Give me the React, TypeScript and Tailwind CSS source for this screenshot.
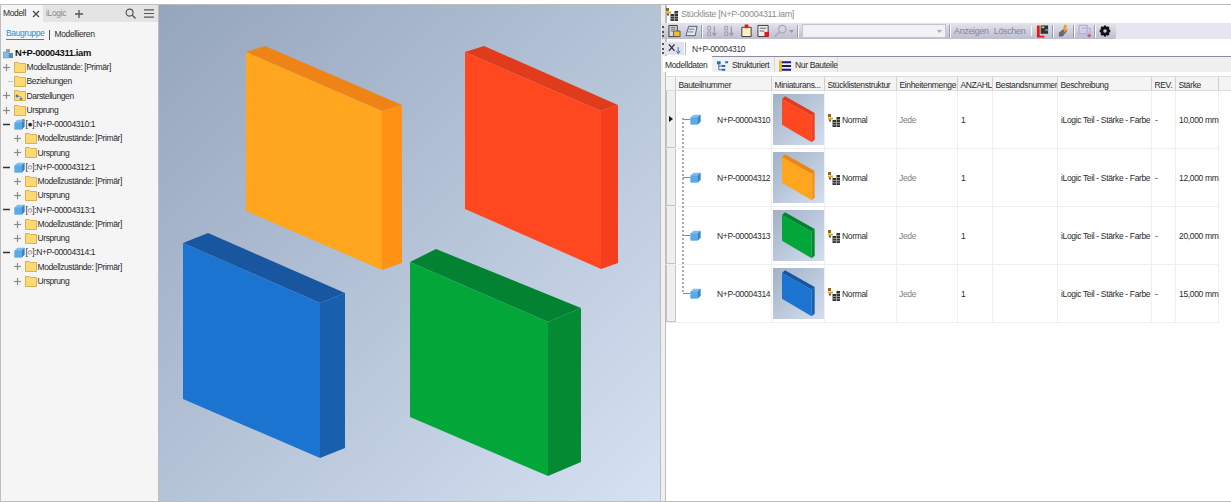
import type { ReactNode } from 'react';

const font = { fontFamily: '"Liberation Sans", Arial, sans-serif' };

function Folder({ dots }: { dots?: boolean }) {
  return (
    <svg width="12" height="11" viewBox="0 0 12 11" className="shrink-0">
      <path d="M0.500 0.500h4l1 1h6v9h-11z" fill="#fbd975" stroke="#d9b14f" />
      {dots && <path d="M2 5h2v2H2zM6 8h2v1.500H6zM3 6.500h4" fill="#3b78b8" stroke="#3b78b8" strokeWidth="0.500" />}
    </svg>
  );
}

function Cube({ size = 11, pin }: { size?: number; pin?: boolean }) {
  return (
    <svg width={size} height={size} viewBox="0 0 11 11" className="shrink-0">
      <path d="M0.500 3.500L3.500 0.800H10.500V7.800L7.800 10.500H0.500z" fill="#7cc0f0" />
      <path d="M0.500 3.500H7.800V10.500H0.500z" fill="#5aaae8" />
      <path d="M7.800 3.500L10.500 0.800V7.800L7.800 10.500z" fill="#3b84c4" />
      {pin && <path d="M8 0h2.500v2.500H8z" fill="#8a8a8a" />}
    </svg>
  );
}

function Toggle({ open }: { open: boolean }) {
  return (
    <svg width="9" height="9" viewBox="0 0 9 9" className="shrink-0">
      <path d="M1 4.500H8" stroke={open ? '#333' : '#8a8a8a'} strokeWidth={open ? 1.500 : 1.200} />
      {!open && <path d="M4.500 1V8" stroke="#8a8a8a" strokeWidth="1.200" />}
    </svg>
  );
}

function Node({ level, toggle, open, icon, children }: { level: 1 | 2; toggle?: boolean; open?: boolean; icon: ReactNode; children: ReactNode }) {
  return (
    <div className={level === 1 ? 'flex items-center h-[14.25px] pl-[1px]' : 'flex items-center h-[14.25px] pl-[12px]'}>
      <span className="w-[11.500px] shrink-0 flex items-center">
        {toggle ? <Toggle open={!!open} /> : <span className="ml-[6px] w-[5px] h-[1px] bg-[#c4c4c4]" />}
      </span>
      {icon}
      <span className="ml-[1px] tracking-[-0.4px] whitespace-nowrap">{children}</span>
    </div>
  );
}

function Part({ name, active }: { name: string; active?: boolean }) {
  return (
    <>
      <Node level={1} toggle open icon={<Cube pin={active} />}>[{active ? '●' : '○'}]:{name}:1</Node>
      <Node level={2} toggle icon={<Folder />}>Modellzustände: [Primär]</Node>
      <Node level={2} toggle icon={<Folder />}>Ursprung</Node>
    </>
  );
}

function Viewport() {
  return (
    <svg viewBox="0 0 501 496" className="w-full h-full block">
      <g transform="translate(-159 -6)">
        <path d="M246 53L265 47L402 106L382 112z" fill="#ee8416" />
        <path d="M246 53L382 112V271L246 212z" fill="#ffa51e" />
        <path d="M382 112L402 106V264L382 271z" fill="#ff9114" />
        <path d="M465 53L484 47L618 106L601 112z" fill="#e03c1c" />
        <path d="M465 53L601 112V270L465 210z" fill="#ff4720" />
        <path d="M601 112L618 106V264L601 270z" fill="#f53e1c" />
        <path d="M183 244L208 234L345 294L320 304z" fill="#1857a0" />
        <path d="M183 244L320 304V459L183 400z" fill="#1a74d0" />
        <path d="M320 304L345 294V449L320 459z" fill="#1860ae" />
        <path d="M410 263L436 250L581 309L548 323z" fill="#038232" />
        <path d="M410 263L548 323V477L410 418z" fill="#03a639" />
        <path d="M548 323L581 309V463L548 477z" fill="#048a33" />
      </g>
    </svg>
  );
}

const thumbColors: Record<string, string[]> = {
  red: ['#e03c1c', '#ff4720', '#f53e1c'],
  orange: ['#ee8416', '#ffa51e', '#ff9114'],
  green: ['#038232', '#03a639', '#048a33'],
  blue: ['#1857a0', '#1a74d0', '#1860ae'],
};

function Thumb({ color }: { color: string }) {
  const [top, front, side] = thumbColors[color];
  return (
    <div className="w-[51px] h-[51px] bg-linear-to-br from-[#a3b1c6] to-[#d3dff0]">
      <svg width="51" height="51" viewBox="0 0 51 51" className="block">
        <path d="M9 5L12 2.300L41.700 19L38.700 21.700z" fill={top} />
        <path d="M9 5L38.700 21.700V48.300L9 30.700z" fill={front} />
        <path d="M38.700 21.700L41.700 19V45.700L38.700 48.300z" fill={side} />
      </svg>
    </div>
  );
}

function StructIcon() {
  return (
    <svg width="13" height="13" viewBox="0 0 13 13" className="shrink-0">
      <path d="M0 0h3v3H0z" fill="#8a6a20" />
      <path d="M0 3.500h5v2H0z" fill="#e8a820" />
      <path d="M1 5.500h2v2H1z" fill="#555" />
      <path d="M4.500 6h3.500v7H4.500zM8.500 3H12v10H8.500z" fill="#333" />
      <path d="M4.500 8.500h7.500M4.500 10.800h7.500M8.500 5.500h3.500" stroke="#bbb" strokeWidth="0.700" />
    </svg>
  );
}

function ToolIcon({ children }: { children: ReactNode }) {
  return (
    <svg width="13" height="14" viewBox="0 0 14 14" className="shrink-0">
      {children}
    </svg>
  );
}

function Sep() {
  return <span className="w-[1px] h-[13px] bg-[#9a9ab0] border-r border-white box-content shrink-0 -mx-[1px]" />;
}

function Grip() {
  return <span className="w-[2px] h-[11px] shrink-0 border-l-2 border-dotted border-[#555]" />;
}

const headers = ['Bauteilnummer', 'Miniaturans...', 'Stücklistenstruktur', 'Einheitenmenge', 'ANZAHL', 'Bestandsnummer', 'Beschreibung', 'REV.', 'Stärke'];

const rows = [
  { nr: 'N+P-00004310', color: 'red', dim: '10,000 mm' },
  { nr: 'N+P-00004312', color: 'orange', dim: '12,000 mm' },
  { nr: 'N+P-00004313', color: 'green', dim: '20,000 mm' },
  { nr: 'N+P-00004314', color: 'blue', dim: '15,000 mm' },
];

const gridCols = 'grid grid-cols-[10px_96px_53px_72px_61px_35px_65px_94px_24px_43px]';

export default function App() {
  return (
    <div style={font} className="w-[1231px] h-[502px] flex flex-col bg-white overflow-hidden text-[8.500px] tracking-[-0.35px] text-[#2a2a2a] leading-none">
      <div className="h-[5px] shrink-0 bg-white border-b border-[#bdbdbd]" />
      <div className="flex-1 flex min-h-0 border-b border-[#bdbdbd]">
        {/* browser */}
        <div className="w-[159px] shrink-0 bg-[#f5f5f5] border-l border-[#bdbdbd] border-r">
          <div className="h-[17px] bg-[#e4e4e4] flex items-center">
            <span className="bg-[#f5f5f5] h-full w-[42px] flex items-center pl-[2px] justify-between pr-[3px]">
              Modell
              <svg width="8" height="8" viewBox="0 0 8 8"><path d="M1 1l6 6M7 1L1 7" stroke="#444" strokeWidth="1.200" /></svg>
            </span>
            <span className="ml-[3px] text-[#8a8a8a]">iLogic</span>
            <svg width="8" height="8" viewBox="0 0 9 9" className="ml-[9px]"><path d="M4.500 0v9M0 4.500h9" stroke="#555" strokeWidth="1.500" /></svg>
            <svg width="11" height="11" viewBox="0 0 12 12" className="ml-auto"><circle cx="5" cy="5" r="3.800" fill="none" stroke="#555" strokeWidth="1.300" /><path d="M8 8l3.500 3.500" stroke="#555" strokeWidth="1.500" /></svg>
            <svg width="10" height="9" viewBox="0 0 11 10" className="ml-[8px] mr-[4px]"><path d="M0 1h11M0 5h11M0 9h11" stroke="#555" strokeWidth="1.300" /></svg>
          </div>
          <div className="h-[19px] flex items-center pl-[5px] pt-[6px]">
            <span className="text-[#1d8fd8] border-b border-[#1d8fd8] pb-[1.500px]">Baugruppe</span>
            <span className="ml-[5px] mr-[4px] w-[1px] h-[10px] bg-[#555]" />
            <span>Modellieren</span>
          </div>
          <div className="mt-[5px]">
            <div className="flex items-center h-[14.25px] pl-[2px]">
              <svg width="10" height="11" viewBox="0 0 10 11" className="shrink-0 mr-[2px]">
                <path d="M0 4h6v6H0z" fill="#8fb8dc" stroke="#5b8fc0" strokeWidth="0.500" />
                <path d="M3 1h4v3H3z" fill="#9a9a9a" />
                <path d="M6 5h4v5H6z" fill="#4a8cc8" />
              </svg>
              <span className="font-bold text-[9.400px] text-[#111]">N+P-00004311.iam</span>
            </div>
            <Node level={1} toggle icon={<Folder />}>Modellzustände: [Primär]</Node>
            <Node level={1} icon={<Folder />}>Beziehungen</Node>
            <Node level={1} toggle icon={<Folder dots />}>Darstellungen</Node>
            <Node level={1} toggle icon={<Folder />}>Ursprung</Node>
            <Part name="N+P-00004310" active />
            <Part name="N+P-00004312" />
            <Part name="N+P-00004313" />
            <Part name="N+P-00004314" />
          </div>
        </div>

        {/* viewport */}
        <div className="w-[501px] shrink-0 bg-linear-to-br from-[#95a5bc] to-[#d6e2f3]">
          <Viewport />
        </div>

        {/* splitter */}
        <div className="w-[7px] shrink-0 bg-[#f0f0f0] border-l border-r-2 border-[#bdbdbd]" />

        {/* BOM window */}
        <div className="flex-1 min-w-0 flex flex-col bg-white">
          <div className="h-[18px] shrink-0 flex items-center text-[9px] text-[#8d8d8d]">
            <span className="mr-[2px] -ml-[1px]"><StructIcon /></span>
            Stückliste [N+P-00004311.iam]
          </div>
          <div className="h-[16px] -ml-[5px] shrink-0 flex bg-[#e6e6f0]">
            <div className="w-[454px] flex items-center gap-[4px] bg-linear-to-b from-[#e4e4ee] to-[#bdbdd0] rounded-br-[2px]">
              <Grip />
              <ToolIcon><path d="M1 1h9v12H1z" fill="#ddd" stroke="#333" /><path d="M3 3h5M3 5h5M3 7h3" stroke="#666" /><path d="M6 7h7v6H6z" fill="#f0c020" stroke="#555" /></ToolIcon>
              <ToolIcon><path d="M4 2h9l-2 10H1z" fill="#dfe6f2" stroke="#556" /><path d="M4 5h6M3 8h6" stroke="#778" /></ToolIcon>
              <Sep />
              <ToolIcon><path d="M2 2h3v4H2zM2 8h3v4H2z" fill="none" stroke="#9a9aa8" /><path d="M9 2v9M7 9l2 3 2-3" fill="none" stroke="#9a9aa8" strokeWidth="1.300" /></ToolIcon>
              <ToolIcon><path d="M2 2h3v4H2zM2 8h3v4H2z" fill="none" stroke="#9a9aa8" /><path d="M9 2v9M7 9l2 3 2-3" fill="none" stroke="#9a9aa8" strokeWidth="1.300" /></ToolIcon>
              <ToolIcon><path d="M2 3h10v10H2z" fill="#fff0c0" stroke="#333" /><path d="M5 0h4v4H5z" fill="#e01818" /></ToolIcon>
              <ToolIcon><path d="M1 1h11v12H1z" fill="#eee" stroke="#333" /><path d="M3 4h7M3 7h5" stroke="#555" /><path d="M8 8h5v5H8z" fill="#e01818" /></ToolIcon>
              <ToolIcon><circle cx="9" cy="5" r="4" fill="none" stroke="#a8a8b0" strokeWidth="1.300" /><path d="M6 8l-5 5" stroke="#a8a8b0" strokeWidth="1.500" /></ToolIcon>
              <svg width="5" height="3" viewBox="0 0 5 3" className="-ml-[2px]"><path d="M0 0h5L2.500 3z" fill="#999" /></svg>
              <Sep />
              <div className="w-[144px] h-[14px] bg-[#f2f2f6] border border-[#c4c4cc] flex items-center justify-end pr-[3px]">
                <svg width="5" height="3" viewBox="0 0 5 3"><path d="M0 0h5L2.500 3z" fill="#aaa" /></svg>
              </div>
              <Sep />
              <span className="text-[#84849a] text-[9px] whitespace-nowrap">Anzeigen</span>
              <span className="text-[#84849a] text-[9px] whitespace-nowrap ml-[1px]">Löschen</span>
              <span className="ml-[3px]"><Sep /></span>
              <ToolIcon><path d="M1 1h3v11h5v2H1z" fill="#e01818" /><path d="M5 1h8v9H5z" fill="#333" /><path d="M6 2h3v2H6z" fill="#f0c020" /><path d="M10 5h3v2h-3z" fill="#5a8cd0" /></ToolIcon>
              <Sep />
              <ToolIcon><path d="M2 9l6-5 3 3-5 6H2z" fill="#667" /><path d="M8 0l3 1-2 4 3-1-5 6 1-4H6z" fill="#f0a020" /></ToolIcon>
              <Sep />
              <ToolIcon><path d="M1 1h9v9H1zM4 4h9v9" fill="none" stroke="#c0a8dc" strokeWidth="1.300" /><path d="M10 12h4M12 10v4" stroke="#e04060" strokeWidth="1.300" /></ToolIcon>
              <Sep />
              <svg width="12" height="12" viewBox="0 0 24 24"><path d="M10 1h4l1 3 3-1.500 3 3L19.500 8.500l3 1v5l-3 1L21 18.500l-3 3L15 20l-1 3h-4l-1-3-3 1.500-3-3L4.500 15.500l-3-1v-5l3-1L3 5.500l3-3L9 4z" fill="#111" /><circle cx="12" cy="12" r="3.500" fill="#ccc" /></svg>
            </div>
          </div>
          <div className="h-[3px] shrink-0" />
          <div className="h-[13px] -ml-[5px] shrink-0 flex items-center">
            <div className="h-full w-[22px] flex items-center gap-[4px] bg-[#e2e2ec]">
              <Grip />
              <ToolIcon><path d="M1 2l6 7M7 2L1 9" stroke="#334" strokeWidth="1.500" /><path d="M11 5v6M9 9l2 3 2-3" fill="none" stroke="#2a6cc0" /></ToolIcon>
            </div>
            <span className="ml-[1px] mr-[6px] w-[1px] h-[13px] bg-[#bbb]" />
            <span className="pt-[1px] text-[#333]">N+P-00004310</span>
          </div>
          <div className="mt-[1px] h-[16px] shrink-0 border-t border-[#8f8a9c] bg-[#f0f0f0] flex items-end -ml-[4px]">
            <span className="h-[16px] w-[49px] bg-white pl-[2px] pt-[3px] flex items-center whitespace-nowrap">Modelldaten</span>
            <span className="h-[15px] w-[63px] flex items-center gap-[3px] pl-[4px] pt-[2px] border-r border-[#d8d8d8] whitespace-nowrap">
              <ToolIcon><path d="M1 2h4v3H1zM6 6h4v2H6zM6 10h4v2H6zM10 2h3v2h-3z" fill="#2a6cc0" /><path d="M3 5v6h3M3 7h3" fill="none" stroke="#2a6cc0" /></ToolIcon>
              Strukturiert
            </span>
            <span className="h-[15px] w-[63px] flex items-center gap-[3px] pl-[4px] pt-[2px] border-r border-[#d8d8d8] whitespace-nowrap">
              <ToolIcon><path d="M0 1h3v13H0z" fill="#e0c020" /><path d="M3 2h10v2H3zM3 6h10v2H3zM3 10h10v2H3z" fill="#1a1a7a" /></ToolIcon>
              Nur Bauteile
            </span>
          </div>

          <div className="flex-1 flex flex-col min-h-0 pt-[4px] -ml-[1px] bg-white">
            <div className="h-[15px] shrink-0 bg-[#f4f4f4] border-t border-b border-[#dcdcdc] flex">
              <div className={gridCols}>
                <div className="border-r border-[#cfcfcf]" />
                {headers.map((h) => (
                  <div key={h} className="border-r border-[#cfcfcf] pl-[2.500px] pt-[3px] flex items-center whitespace-nowrap overflow-hidden">{h}</div>
                ))}
              </div>
            </div>
            <div className="relative">
              {/* tree connector over the part column */}
              <div className="absolute left-[16px] top-[27px] h-[174px] w-[2px] border-l-2 border-dotted border-[#aaa]" />
              {rows.map((r, i) => (
                <div key={r.nr} className={gridCols + ' w-fit h-[58px] border-b border-[#efefef]'}>
                  <div className="bg-[#efefef] border border-t-0 border-[#c4c4c4] flex items-center justify-center">
                    {i === 0 && <svg width="4" height="6" viewBox="0 0 4 6"><path d="M0 0l4 3-4 3z" fill="#111" /></svg>}
                  </div>
                  <div className="flex items-center border-r border-[#efefef]">
                    <span className="ml-[7px] w-[7px] h-[1px] bg-[#888] shrink-0" />
                    <Cube />
                    <span className="ml-[16px] pt-[1px] whitespace-nowrap">{r.nr}</span>
                  </div>
                  <div className="flex items-center justify-end border-r border-[#efefef]"><Thumb color={r.color} /></div>
                  <div className="flex items-center pl-[3px] pt-[1px] gap-[1px] border-r border-[#efefef]"><StructIcon />Normal</div>
                  <div className="flex items-center pl-[2px] pt-[1px] text-[#808080] border-r border-[#efefef]">Jede</div>
                  <div className="flex items-center pl-[3px] pt-[1px] border-r border-[#efefef]">1</div>
                  <div className="border-r border-[#efefef]" />
                  <div className="flex items-center pl-[3px] pt-[1px] whitespace-nowrap border-r border-[#efefef]">iLogic Teil - Stärke - Farbe</div>
                  <div className="flex items-center pl-[3px] pt-[1px] border-r border-[#efefef]">-</div>
                  <div className="flex items-center pl-[3px] pt-[1px] whitespace-nowrap border-r border-[#efefef]">{r.dim}</div>
                </div>
              ))}
            </div>
          </div>
        </div>
      </div>
    </div>
  );
}
